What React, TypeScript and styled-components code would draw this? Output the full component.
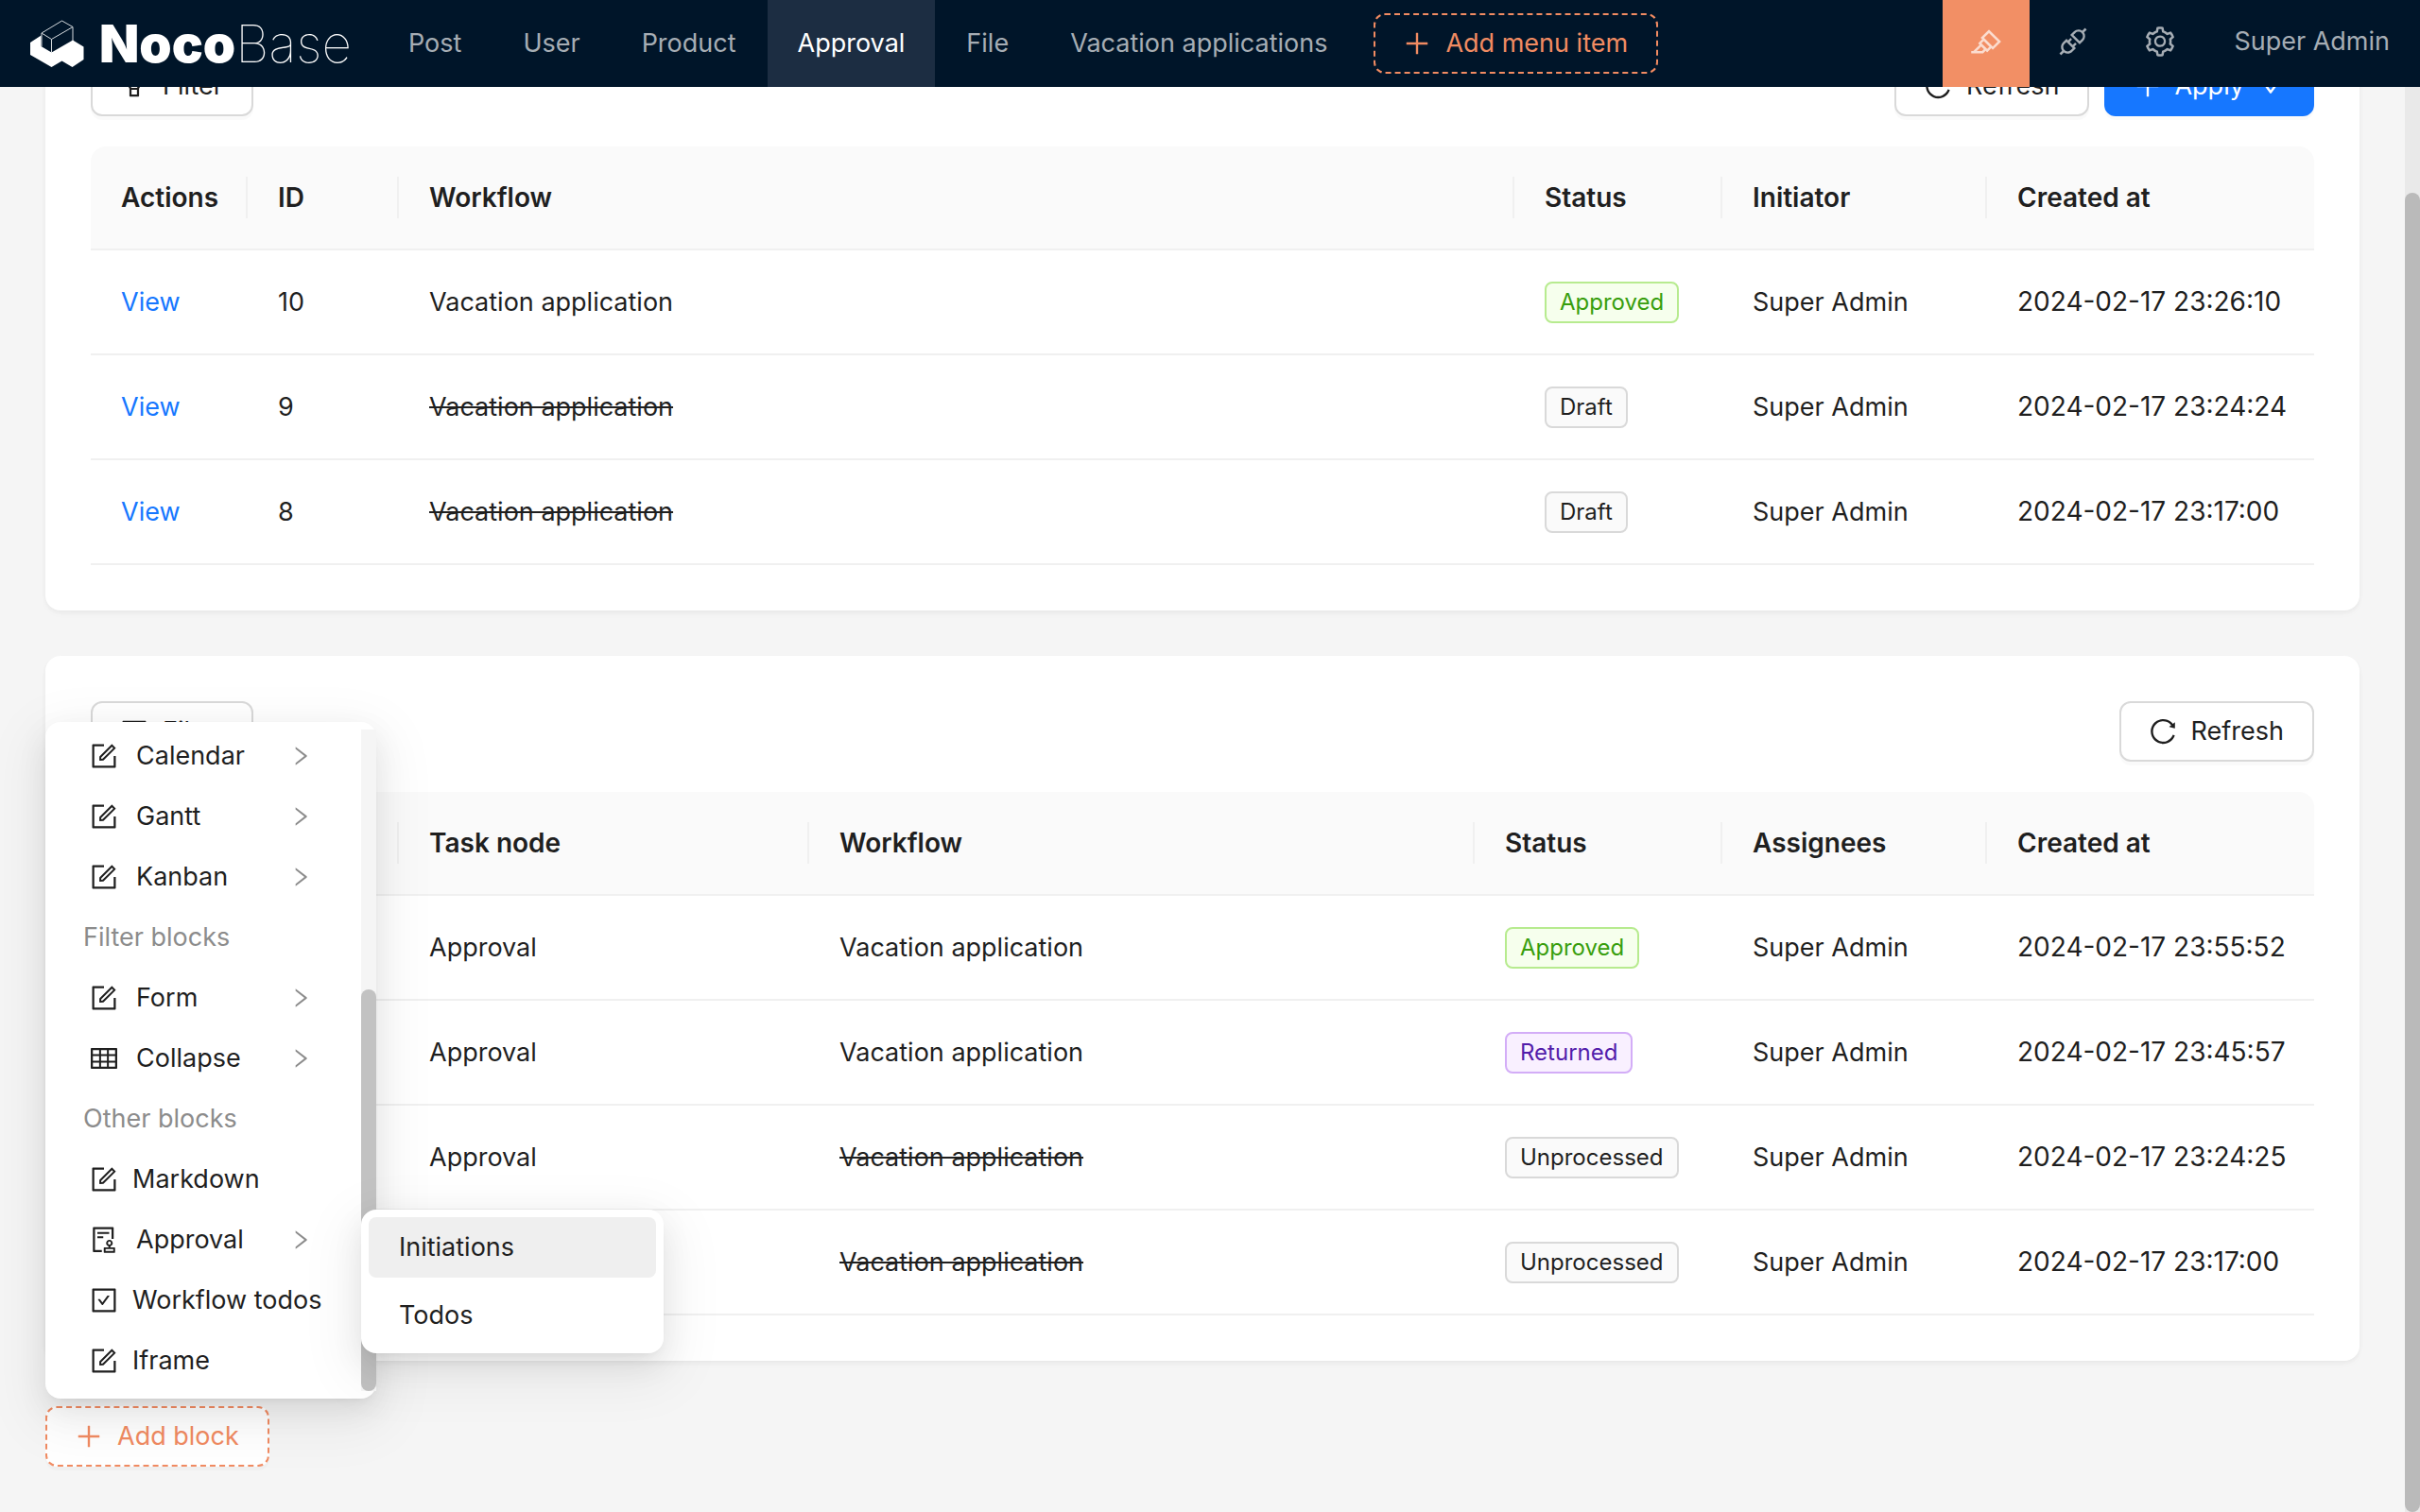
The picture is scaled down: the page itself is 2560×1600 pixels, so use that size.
import React from 'react';
import styled, { createGlobalStyle, css } from 'styled-components';
import {
  AiOutlinePlus,
  AiOutlineReload,
  AiOutlineFilter,
  AiOutlineHighlight,
  AiOutlineApi,
  AiOutlineSetting,
  AiOutlineForm,
  AiOutlineTable,
  AiOutlineAudit,
  AiOutlineCheckSquare,
  AiOutlineDown,
  AiOutlineRight,
} from 'react-icons/ai';

const color = {
  text: '#1f1f1f',
  muted: '#8c8c8c',
  navText: '#a6adb4',
  nav: '#001529',
  designer: '#f18b62',
  primary: '#1677ff',
  line: '#f0f0f0',
  border: '#d9d9d9',
  page: '#f5f5f5',
};

const GlobalStyle = createGlobalStyle`
  *, *::before, *::after { box-sizing: border-box; }
  body {
    margin: 0;
    color: ${color.text};
    background: ${color.page};
    font-family: Inter, "Liberation Sans", sans-serif;
    font-size: 27px;
    line-height: 44px;
  }
  button { font: inherit; color: inherit; cursor: pointer; }
  a { text-decoration: none; }
  svg { display: block; flex: none; }
`;

const Page = styled.div`
  display: grid;
  grid-template-rows: auto minmax(0, 1fr);
  height: 100vh;
`;

/* ---------- header ---------- */

const Header = styled.header`
  display: flex;
  align-items: stretch;
  height: 92px;
  padding-right: 32px;
  color: ${color.navText};
  background: ${color.nav};
`;

const Brand = styled.a`
  display: flex;
  align-items: center;
  gap: 16px;
  width: 400px;
  padding-left: 32px;
  color: #fff;
  font-size: 55px;
  line-height: 64px;
`;

const BrandBold = styled.span`
  font-weight: 900;
`;

const BrandThin = styled.span`
  font-weight: 100;
`;

const Nav = styled.nav`
  display: flex;
  flex: 1;
  gap: 1px;
`;

const NavLink = styled.a<{ $active?: boolean }>`
  display: flex;
  align-items: center;
  padding: 0 32px;
  white-space: nowrap;
  color: ${(p) => (p.$active ? '#fff' : color.navText)};
  background: ${(p) => (p.$active ? '#1c2d42' : 'transparent')};
`;

const HeaderTools = styled.div`
  display: flex;
  padding-left: 32px;
`;

const ToolButton = styled.button<{ $on?: boolean }>`
  display: grid;
  place-items: center;
  width: 92px;
  padding: 0 0 4px;
  border: 0;
  font-size: 36px;
  color: ${(p) => (p.$on ? '#fbdccf' : color.navText)};
  background: ${(p) => (p.$on ? '#f28f65' : 'transparent')};
`;

const UserButton = styled.button`
  padding: 0 0 4px 32px;
  border: 0;
  background: none;
  white-space: nowrap;
`;

/* ---------- buttons ---------- */

const Button = styled.button<{ $kind?: 'primary' | 'designer' }>`
  display: inline-flex;
  align-items: center;
  gap: 14px;
  height: 64px;
  padding: 0 30px 0 28px;
  border: 2px solid ${color.border};
  border-radius: 12px;
  background: #fff;
  white-space: nowrap;
  box-shadow: 0 4px 0 rgba(0, 0, 0, 0.02);
  svg { font-size: 32px; }
  ${(p) =>
    p.$kind === 'primary' &&
    css`
      gap: 12px;
      padding-right: 28px;
      color: #fff;
      border-color: ${color.primary};
      background: ${color.primary};
    `}
  ${(p) =>
    p.$kind === 'designer' &&
    css`
      color: ${color.designer};
      border: 2px dashed ${color.designer};
    `}
`;

const AddMenuItem = styled(Button)`
  align-self: center;
  margin-left: 16px;
  background: transparent;
  box-shadow: none;
`;

/* ---------- content ---------- */

const Body = styled.div`
  display: grid;
  grid-template-columns: minmax(0, 1fr) 16px;
  overflow: hidden;
`;

const scrolledBy = 129;

const Content = styled.main`
  display: flex;
  flex-direction: column;
  align-items: stretch;
  gap: 48px;
  margin-top: -${scrolledBy}px;
  padding: 48px;
`;

const Track = styled.div`
  display: flex;
  flex-direction: column;
  justify-content: flex-end;
  background: #e9e9e9;
`;

const Thumb = styled.div<{ $share: number }>`
  height: ${(p) => p.$share}%;
  border-radius: 8px;
  background: #bababa;
`;

const Card = styled.section`
  padding: 48px;
  border-radius: 16px;
  background: #fff;
  box-shadow: 0 2px 4px rgba(0, 0, 0, 0.03), 0 2px 12px -2px rgba(0, 0, 0, 0.02),
    0 4px 8px rgba(0, 0, 0, 0.02);
`;

const Toolbar = styled.div`
  display: flex;
  gap: 16px;
  margin-bottom: 32px;
`;

const Spacer = styled.span`
  flex: 1;
`;

const Table = styled.table`
  width: 100%;
  table-layout: fixed;
  border-spacing: 0;
`;

const Col = styled.col<{ $width?: number }>`
  width: ${(p) => (p.$width ? `${p.$width}px` : 'auto')};
`;

const Th = styled.th`
  height: 110px;
  padding: 0;
  text-align: left;
  font-size: 28px;
  font-weight: 600;
  background: #fafafa;
  border-bottom: 2px solid ${color.line};
  &:first-child { border-top-left-radius: 16px; }
  &:last-child { border-top-right-radius: 16px; }
`;

const ThLabel = styled.div`
  padding: 0 30px 0 32px;
  border-right: 2px solid ${color.line};
  ${Th}:last-child & { border-right-color: transparent; }
`;

const Td = styled.td`
  height: 111px;
  padding: 0 0 0 32px;
  white-space: nowrap;
  border-bottom: 2px solid ${color.line};
`;

const ViewLink = styled.a`
  color: ${color.primary};
`;

const DateTime = styled.time`
  font-size: 28px;
`;

type Status = 'Approved' | 'Draft' | 'Returned' | 'Unprocessed';

const tagColors: Record<Status, [string, string, string]> = {
  Approved: ['#389e0d', '#b7eb8f', '#f6ffed'],
  Returned: ['#531dab', '#d3adf7', '#f9f0ff'],
  Draft: [color.text, color.border, '#fafafa'],
  Unprocessed: [color.text, color.border, '#fafafa'],
};

const Tag = styled.span<{ $status: Status }>`
  display: inline-block;
  padding: 0 14px;
  border: 2px solid ${(p) => tagColors[p.$status][1]};
  border-radius: 8px;
  color: ${(p) => tagColors[p.$status][0]};
  background: ${(p) => tagColors[p.$status][2]};
  font-size: 24px;
  line-height: 40px;
  vertical-align: middle;
`;

/* ---------- add block menu ---------- */

const AddBlock = styled.div`
  position: relative;
  align-self: flex-start;
`;

const popup = css`
  position: absolute;
  border-radius: 16px;
  background: #fff;
  box-shadow: 0 12px 32px rgba(0, 0, 0, 0.08), 0 6px 12px -8px rgba(0, 0, 0, 0.12),
    0 18px 56px 16px rgba(0, 0, 0, 0.05);
`;

const Menu = styled.div`
  ${popup}
  left: 0;
  bottom: calc(100% + 8px);
  display: grid;
  grid-template-columns: minmax(0, 1fr) 16px;
  width: 350px;
  height: 716px;
  padding: 8px 0;
`;

const MenuItems = styled.div`
  display: flex;
  flex-direction: column;
  justify-content: flex-end;
  overflow: hidden;
`;

const MenuTrack = styled(Track)`
  background: #f5f5f5;
`;

const MenuThumb = styled(Thumb)`
  background: #c2c2c2;
`;

const MenuItem = styled.button<{ $sub?: boolean }>`
  display: flex;
  align-items: center;
  flex: none;
  gap: ${(p) => (p.$sub ? 18 : 14)}px;
  height: 64px;
  padding: 0 51px 0 46px;
  border: 0;
  background: none;
  text-align: left;
  white-space: nowrap;
  svg { font-size: 32px; }
`;

const Arrow = styled(AiOutlineRight)`
  margin-left: auto;
  color: ${color.muted};
  && { font-size: 26px; }
`;

const MenuGroup = styled.div`
  flex: none;
  padding: 10px 40px;
  color: ${color.muted};
`;

const SubMenu = styled.div`
  ${popup}
  left: 334px;
  bottom: 120px;
  display: flex;
  flex-direction: column;
  gap: 8px;
  width: 320px;
  padding: 8px;
`;

const SubMenuItem = styled.button<{ $hover?: boolean }>`
  height: 64px;
  padding: 0 32px;
  border: 0;
  border-radius: 8px;
  text-align: left;
  background: ${(p) => (p.$hover ? '#efefef' : 'transparent')};
`;

/* ---------- data ---------- */

const navItems = ['Post', 'User', 'Product', 'Approval', 'File', 'Vacation applications'];

type Cell = React.ReactNode;
interface Column {
  title: string;
  width?: number;
}

const initiationColumns: Column[] = [
  { title: 'Actions', width: 166 },
  { title: 'ID', width: 160 },
  { title: 'Workflow' },
  { title: 'Status', width: 220 },
  { title: 'Initiator', width: 280 },
  { title: 'Created at', width: 346 },
];

const todoColumns: Column[] = [
  { title: 'Actions', width: 326 },
  { title: 'Task node', width: 434 },
  { title: 'Workflow' },
  { title: 'Status', width: 262 },
  { title: 'Assignees', width: 280 },
  { title: 'Created at', width: 346 },
];

const view = <ViewLink href="#view">View</ViewLink>;
const tag = (s: Status) => <Tag $status={s}>{s}</Tag>;
const at = (t: string) => <DateTime>{t}</DateTime>;

const initiations: Cell[][] = [
  [view, '10', 'Vacation application', tag('Approved'), 'Super Admin', at('2024-02-17 23:26:10')],
  [view, '9', <s>Vacation application</s>, tag('Draft'), 'Super Admin', at('2024-02-17 23:24:24')],
  [view, '8', <s>Vacation application</s>, tag('Draft'), 'Super Admin', at('2024-02-17 23:17:00')],
];

const todos: Cell[][] = [
  [view, 'Approval', 'Vacation application', tag('Approved'), 'Super Admin', at('2024-02-17 23:55:52')],
  [view, 'Approval', 'Vacation application', tag('Returned'), 'Super Admin', at('2024-02-17 23:45:57')],
  [view, 'Approval', <s>Vacation application</s>, tag('Unprocessed'), 'Super Admin', at('2024-02-17 23:24:25')],
  [view, 'Approval', <s>Vacation application</s>, tag('Unprocessed'), 'Super Admin', at('2024-02-17 23:17:00')],
];

function DataTable({ columns, rows }: { columns: Column[]; rows: Cell[][] }) {
  return (
    <Table>
      <colgroup>
        {columns.map((c) => (
          <Col key={c.title} $width={c.width} />
        ))}
      </colgroup>
      <thead>
        <tr>
          {columns.map((c) => (
            <Th key={c.title} scope="col">
              <ThLabel>{c.title}</ThLabel>
            </Th>
          ))}
        </tr>
      </thead>
      <tbody>
        {rows.map((row, i) => (
          <tr key={i}>
            {row.map((cell, j) => (
              <Td key={j}>{cell}</Td>
            ))}
          </tr>
        ))}
      </tbody>
    </Table>
  );
}

function Logo() {
  return (
    <svg width="57" height="50" viewBox="0 0 57 50" aria-hidden="true">
      <path
        d="M0 24 L11.5 16.5 V28 L22.5 34.5 L45 21.5 L56.5 28.5 V42 L44.5 50 L33.5 43.5 L22.5 50 L0 37 Z"
        fill="#fff"
      />
      <path
        d="M12 14 L33.5 1 L45 7.5 V22 M12 14 V28 M12 14 L22.5 20.5 L45 7.5 M22.5 20.5 V35"
        fill="none"
        stroke="#d5dade"
        strokeWidth="1"
      />
    </svg>
  );
}

export default function App() {
  return (
    <Page>
      <GlobalStyle />
      <Header>
        <Brand href="#home" aria-label="NocoBase">
          <Logo />
          <span>
            <BrandBold>Noco</BrandBold>
            <BrandThin>Base</BrandThin>
          </span>
        </Brand>
        <Nav>
          {navItems.map((item) => (
            <NavLink key={item} href="#menu" $active={item === 'Approval'}>
              {item}
            </NavLink>
          ))}
          <AddMenuItem $kind="designer">
            <AiOutlinePlus />
            Add menu item
          </AddMenuItem>
        </Nav>
        <HeaderTools>
          <ToolButton $on aria-label="UI editor">
            <AiOutlineHighlight />
          </ToolButton>
          <ToolButton aria-label="Plugins">
            <AiOutlineApi />
          </ToolButton>
          <ToolButton aria-label="Settings">
            <AiOutlineSetting />
          </ToolButton>
          <UserButton>Super Admin</UserButton>
        </HeaderTools>
      </Header>
      <Body>
        <Content>
          <Card>
            <Toolbar>
              <Button>
                <AiOutlineFilter />
                Filter
              </Button>
              <Spacer />
              <Button>
                <AiOutlineReload />
                Refresh
              </Button>
              <Button $kind="primary">
                <AiOutlinePlus />
                Apply
                <AiOutlineDown />
              </Button>
            </Toolbar>
            <DataTable columns={initiationColumns} rows={initiations} />
          </Card>
          <Card>
            <Toolbar>
              <Button>
                <AiOutlineFilter />
                Filter
              </Button>
              <Spacer />
              <Button>
                <AiOutlineReload />
                Refresh
              </Button>
            </Toolbar>
            <DataTable columns={todoColumns} rows={todos} />
          </Card>
          <AddBlock>
            <Button $kind="designer">
              <AiOutlinePlus />
              Add block
            </Button>
            <Menu>
              <MenuItems>
                <MenuItem $sub><AiOutlineForm />Calendar<Arrow /></MenuItem>
                <MenuItem $sub><AiOutlineForm />Gantt<Arrow /></MenuItem>
                <MenuItem $sub><AiOutlineForm />Kanban<Arrow /></MenuItem>
                <MenuGroup>Filter blocks</MenuGroup>
                <MenuItem $sub><AiOutlineForm />Form<Arrow /></MenuItem>
                <MenuItem $sub><AiOutlineTable />Collapse<Arrow /></MenuItem>
                <MenuGroup>Other blocks</MenuGroup>
                <MenuItem><AiOutlineForm />Markdown</MenuItem>
                <MenuItem $sub><AiOutlineAudit />Approval<Arrow /></MenuItem>
                <MenuItem><AiOutlineCheckSquare />Workflow todos</MenuItem>
                <MenuItem><AiOutlineForm />Iframe</MenuItem>
              </MenuItems>
              <MenuTrack>
                <MenuThumb $share={60.7} />
              </MenuTrack>
            </Menu>
            <SubMenu>
              <SubMenuItem $hover>Initiations</SubMenuItem>
              <SubMenuItem>Todos</SubMenuItem>
            </SubMenu>
          </AddBlock>
        </Content>
        <Track>
          <Thumb $share={92.6} />
        </Track>
      </Body>
    </Page>
  );
}
